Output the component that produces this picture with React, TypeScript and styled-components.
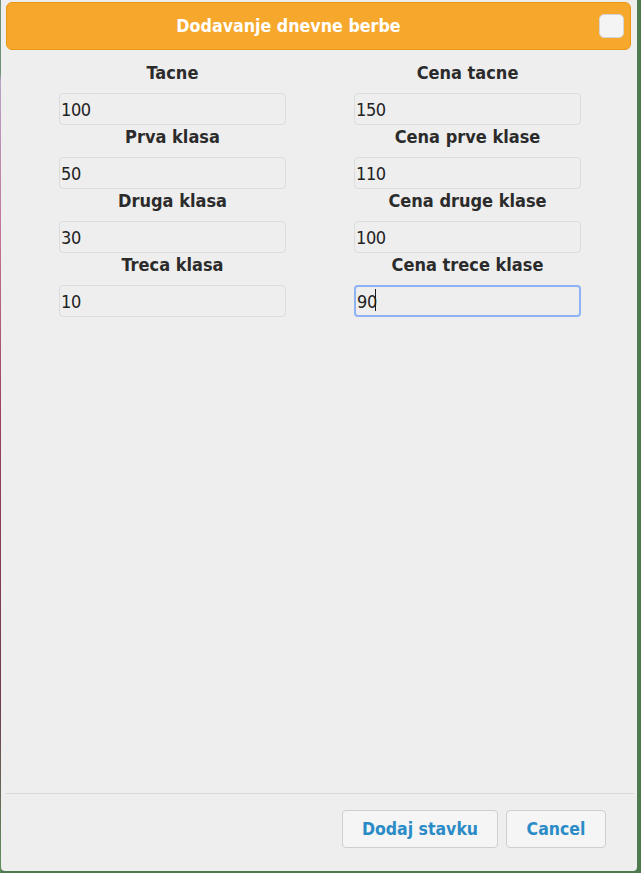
import { FC } from "react";
import styled, { createGlobalStyle } from "styled-components";

type Field = { label: string; value: string; focused?: boolean };

const rows: [Field, Field][] = [
  [{ label: "Tacne", value: "100" }, { label: "Cena tacne", value: "150" }],
  [{ label: "Prva klasa", value: "50" }, { label: "Cena prve klase", value: "110" }],
  [{ label: "Druga klasa", value: "30" }, { label: "Cena druge klase", value: "100" }],
  [{ label: "Treca klasa", value: "10" }, { label: "Cena trece klase", value: "90", focused: true }],
];

const App: FC = () => {
  return (
    <>
      <GlobalStyle />
      <Dialog>
        <Header>
          <Title>Dodavanje dnevne berbe</Title>
          <CloseBox aria-label="close" />
        </Header>

        <Body>
          <FormGrid>
            {rows.flat().map((f) => (
              <FieldCell key={f.label}>
                <Label>{f.label}</Label>
                <InputWrap>
                  <Input $focused={f.focused} defaultValue={f.value} readOnly />
                  {f.focused && <Caret />}
                </InputWrap>
              </FieldCell>
            ))}
          </FormGrid>
        </Body>

        <Footer>
          <Button>Dodaj stavku</Button>
          <Button $wide={false}>Cancel</Button>
        </Footer>
      </Dialog>
    </>
  );
};

const GlobalStyle = createGlobalStyle`
  html, body {
    margin: 0;
    padding: 0;
  }

  body {
    height: 873px;
    overflow: hidden;
    background:
      linear-gradient(
        to bottom,
        #6f9074 0,
        #6f9074 72px,
        #b7a3c6 82px,
        #c36f92 250px,
        #9a3f62 420px,
        #6e3a4e 700px,
        #5f8a5c 860px
      ) no-repeat 0 0 / 1px 100%,
      #4e7a50;
    font-family: "DejaVu Sans Condensed", "DejaVu Sans", sans-serif;
  }
`;

const Dialog = styled.div`
  display: flex;
  flex-direction: column;

  margin-left: 1px;
  height: 871px;
  width: 636px;

  background: #eeeeee;
  border-radius: 0 0 4px 4px;
`;

const Header = styled.div`
  display: flex;
  align-items: center;

  margin: 2px 6px 0 5px;
  height: 46px;
  padding-right: 6px;

  background: #f6a82d;
  border: 1px solid #eb9612;
  border-radius: 6px;
`;

const Title = styled.h1`
  flex: 1;
  margin: 0;
  padding-right: 29px;

  color: #ffffff;
  font-size: 17.7px;
  font-weight: 700;
  text-align: center;
`;

const CloseBox = styled.div`
  height: 22px;
  width: 23px;

  background: #f4f4f4;
  border: 1px solid #d4d4d4;
  border-radius: 5px;
`;

const Body = styled.div`
  flex: 1;
  padding: 13px 0 0 58px;
`;

const FormGrid = styled.div`
  display: grid;
  grid-template-columns: 227px 227px;
  column-gap: 68px;
`;

const FieldCell = styled.div`
  display: flex;
  flex-direction: column;
`;

const Label = styled.div`
  margin-bottom: 10px;

  color: #2b2b2b;
  font-size: 18px;
  font-weight: 700;
  line-height: 20px;
  text-align: center;
`;

const InputWrap = styled.div`
  position: relative;
  margin-bottom: 2px;
`;

const Input = styled.input<{ $focused?: boolean }>`
  display: block;
  box-sizing: border-box;
  height: 32px;
  width: 100%;
  padding: 0 0 0 1px;

  background: #eeeeee;
  border: ${({ $focused }) =>
    $focused ? "2px solid #8db3f5" : "1px solid #dcdcdc"};
  border-radius: 4px;
  outline: none;

  color: #222222;
  font-family: "DejaVu Sans Condensed", "DejaVu Sans", sans-serif;
  font-size: 18px;
  letter-spacing: -0.4px;
`;

const Caret = styled.span`
  position: absolute;
  left: 21px;
  top: 4px;

  height: 22px;
  width: 1px;

  background: #1a1a1a;
`;

const Footer = styled.div`
  display: flex;
  justify-content: flex-end;
  gap: 8px;

  margin: 0 3px 0 5px;
  padding: 16px 28px 23px 0;

  border-top: 1px solid #d8d8d8;
`;

const Button = styled.button<{ $wide?: boolean }>`
  height: 38px;
  width: ${({ $wide = true }) => ($wide ? "156px" : "100px")};

  background: #f5f5f5;
  border: 1px solid #cfcfcf;
  border-radius: 4px;

  color: #2a8bc7;
  font-family: "DejaVu Sans Condensed", "DejaVu Sans", sans-serif;
  font-size: 17.5px;
  font-weight: 700;
`;

export default App;
